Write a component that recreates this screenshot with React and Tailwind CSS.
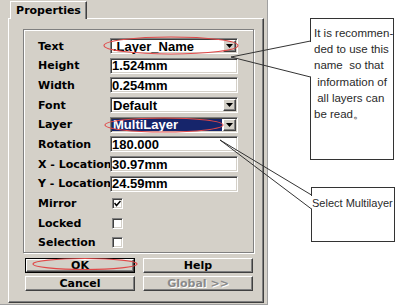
import React from "react";

const sunken =
  "border border-t-[#808080] border-l-[#808080] border-b-white border-r-white shadow-[inset_1px_1px_0_#404040,inset_-1px_-1px_0_#d4d0c8]";
const raised =
  "border border-t-white border-l-white border-b-[#404040] border-r-[#404040] shadow-[inset_-1px_-1px_0_#808080]";

function Label({ children }) {
  return (
    <div className="w-[72px] shrink-0 text-[11px] font-bold font-['DejaVu_Sans',sans-serif] text-black leading-none whitespace-pre">
      {children}
    </div>
  );
}

function Field({ value }) {
  return (
    <div
      className={`w-[128px] h-[16px] bg-white ${sunken} flex items-center pl-[1px] text-[13px] font-bold font-['Liberation_Sans',Arial,sans-serif] leading-none text-black`}
    >
      {value}
    </div>
  );
}

function DropBtn() {
  return (
    <div
      className={`w-[13px] h-full bg-[#d4d0c8] ${raised} flex items-center justify-center shrink-0`}
    >
      <svg width="7" height="4" viewBox="0 0 7 4">
        <path d="M0 0 H7 L3.5 4 Z" fill="#000" />
      </svg>
    </div>
  );
}

function Combo({ value, selected }) {
  return (
    <div
      className={`w-[128px] h-[16px] bg-white ${sunken} flex items-stretch p-[1px] text-[13px] font-bold font-['Liberation_Sans',Arial,sans-serif] leading-none`}
    >
      <div
        className={`flex-1 flex items-center pl-[1px] mr-[1px] ${
          selected ? "bg-[#16256b] text-white" : "text-black"
        }`}
      >
        {value}
      </div>
      <DropBtn />
    </div>
  );
}

function Check({ checked }) {
  return (
    <div className={`ml-[2px] w-[11px] h-[11px] bg-white ${sunken} flex items-center justify-center`}>
      {checked && (
        <svg width="7" height="7" viewBox="0 0 7 7">
          <path d="M0.5 3 L2.5 5.5 L6.5 1" stroke="#000" strokeWidth="1.5" fill="none" />
        </svg>
      )}
    </div>
  );
}

function Row({ label, children }) {
  return (
    <div className="flex items-center h-[16px]">
      <Label>{label}</Label>
      {children}
    </div>
  );
}

function Button({ children, isDefault, disabled }) {
  const inner = (
    <div
      className={`w-full h-full bg-[#d4d0c8] ${raised} flex items-center justify-center text-[11px] font-bold font-['DejaVu_Sans',sans-serif] leading-none ${
        disabled ? "text-[#8a8a8a] [text-shadow:1px_1px_0_#ffffff]" : "text-black"
      }`}
    >
      {children}
    </div>
  );
  return (
    <div className={`w-[110px] h-[15px] ${isDefault ? "border border-black" : ""}`}>{inner}</div>
  );
}

function Dialog() {
  return (
    <div className="w-[268px] h-[305px] shrink-0 bg-[#d4d0c8] border-r border-b border-r-[#a0a0a0] border-b-[#a0a0a0] flex flex-col pl-[8px] pt-[1px]">
      <div className="relative z-10 ml-[2px] -mb-[1px] w-[77px] h-[18px] bg-[#d4d0c8] border-l border-t border-white border-r border-r-[#404040] shadow-[inset_-1px_0_0_#808080] flex items-center justify-center text-[11px] font-bold font-['DejaVu_Sans',sans-serif] text-black leading-none">
        Properties
      </div>
      <div className="w-[256px] h-[285px] border border-t-white border-l-white border-r-[#404040] border-b-[#404040] shadow-[inset_-1px_-1px_0_#808080] pl-[14px] pt-[10px] flex flex-col">
        <div className="w-[231px] h-[224px] border border-[#808080] shadow-[inset_1px_1px_0_#ffffff,1px_1px_0_#ffffff] pl-[14px] pt-[8px] flex flex-col gap-[3.7px]">
          <Row label="Text">
            <Combo value=".Layer_Name" />
          </Row>
          <Row label="Height">
            <Field value="1.524mm" />
          </Row>
          <Row label="Width">
            <Field value="0.254mm" />
          </Row>
          <Row label="Font">
            <Combo value="Default" />
          </Row>
          <Row label="Layer">
            <Combo value="MultiLayer" selected />
          </Row>
          <Row label="Rotation">
            <Field value="180.000" />
          </Row>
          <Row label="X - Location">
            <Field value="30.97mm" />
          </Row>
          <Row label="Y - Location">
            <Field value="24.59mm" />
          </Row>
          <Row label="Mirror">
            <Check checked />
          </Row>
          <Row label="Locked">
            <Check />
          </Row>
          <Row label="Selection">
            <Check />
          </Row>
        </div>
        <div className="ml-[2px] mt-[5px] grid grid-cols-[110px_110px] gap-x-[8px] gap-y-[3px]">
          <Button isDefault>OK</Button>
          <Button>Help</Button>
          <Button>Cancel</Button>
          <Button disabled>Global &gt;&gt;</Button>
        </div>
      </div>
    </div>
  );
}

export default function App() {
  return (
    <div className="relative w-[400px] h-[308px] bg-white flex overflow-hidden">
      <Dialog />
      <div className="flex flex-col pl-[42px] pt-[18px] font-['Liberation_Sans',Arial,sans-serif] text-[#2a2a2a]">
        <div className="w-[84px] h-[142px] border border-[#333333] bg-white pl-[3px] pt-[6px] text-[11.5px] leading-[16.2px] whitespace-pre">
          <div>It is recommen-</div>
          <div>ded to use this</div>
          <div>name  so that</div>
          <div> information of</div>
          <div> all layers can</div>
          <div>be read。</div>
        </div>
        <div className="ml-[1px] mt-[27px] w-[84px] h-[55px] border border-[#333333] bg-white pt-[7px] text-[11px] leading-[16px] whitespace-nowrap">
          Select Multilayer
        </div>
      </div>
      <svg
        className="absolute left-0 top-0 pointer-events-none"
        width="400"
        height="308"
        viewBox="0 0 400 308"
      >
        <line x1="310.5" y1="42" x2="310.5" y2="76.5" stroke="#ffffff" strokeWidth="1.6" />
        <line x1="231" y1="57" x2="310.5" y2="41" stroke="#333" strokeWidth="1" />
        <line x1="231" y1="57" x2="310.5" y2="77" stroke="#333" strokeWidth="1" />
        <line x1="311.5" y1="196" x2="311.5" y2="208.5" stroke="#ffffff" strokeWidth="1.6" />
        <line x1="220" y1="140" x2="311.5" y2="195" stroke="#333" strokeWidth="1" />
        <line x1="220" y1="140" x2="311.5" y2="209" stroke="#333" strokeWidth="1" />
        <ellipse cx="171" cy="45.5" rx="67" ry="8.5" fill="none" stroke="#e04848" strokeWidth="1.1" />
        <ellipse cx="164" cy="125" rx="59" ry="7" fill="none" stroke="#e04848" strokeWidth="1.1" />
        <ellipse cx="85" cy="264" rx="52" ry="5.5" fill="none" stroke="#e04848" strokeWidth="1.1" />
      </svg>
    </div>
  );
}
